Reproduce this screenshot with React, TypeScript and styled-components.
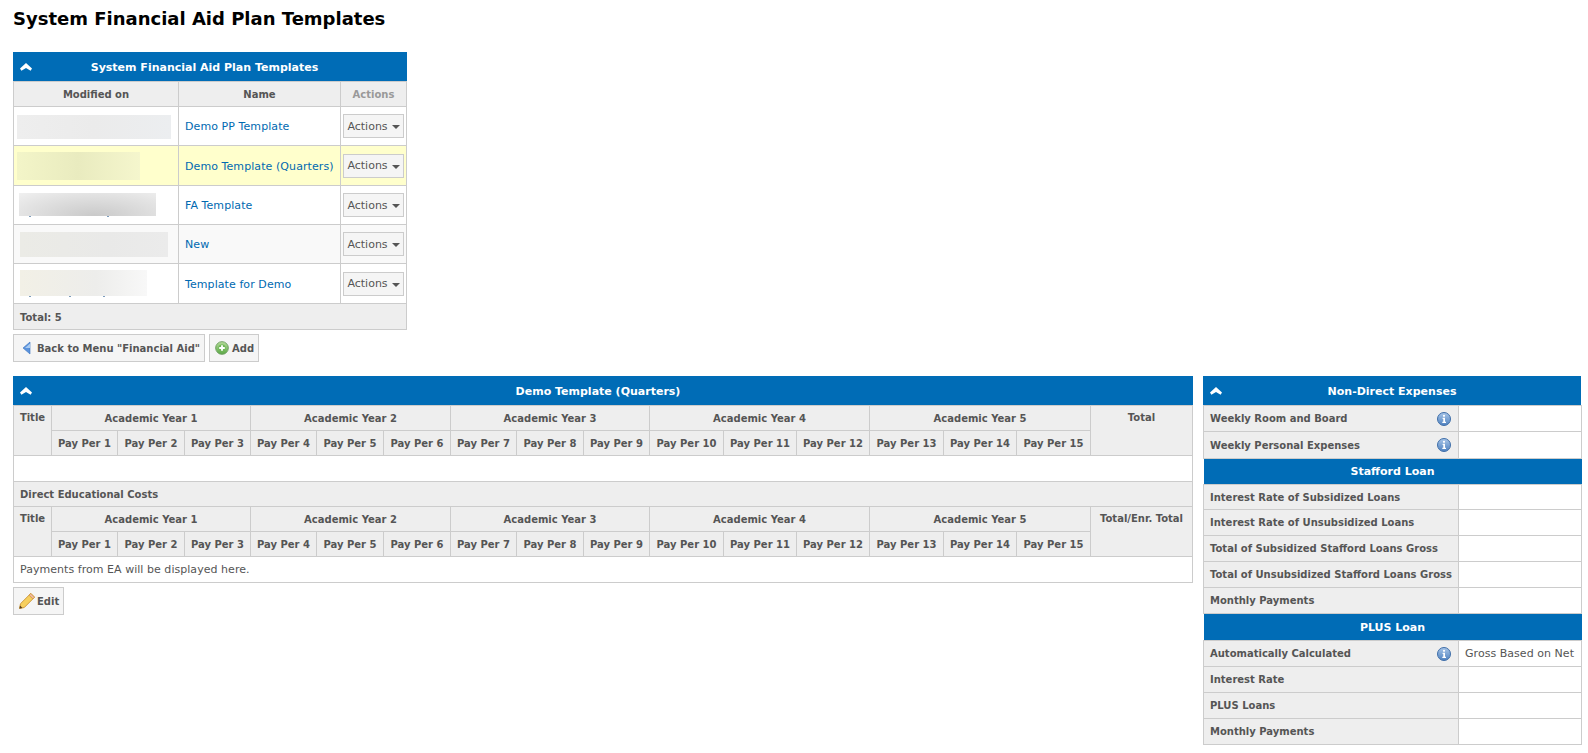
import React from "react";
import styled, { createGlobalStyle } from "styled-components";

const Global = createGlobalStyle`
  html, body { margin: 0; padding: 0; background: #fff; }
  body { font-family: "DejaVu Sans", Verdana, sans-serif; font-size: 11px; color: #555; }
`;

const Page = styled.div`
  width: 1588px;
  height: 753px;
  overflow: hidden;
  box-sizing: border-box;
  padding: 0 7px 0 13px;
`;
const Title = styled.h1`
  margin: 0;
  padding-top: 9px;
  height: 52px;
  box-sizing: border-box;
  font-size: 18px;
  line-height: 20px;
  font-weight: bold;
  color: #000;
`;
const Panel = styled.section<{ $w?: number }>`
  width: ${(p) => (p.$w ? `${p.$w}px` : "auto")};
  flex: none;
`;
const Bar = styled.div<{ $h?: number; $shift?: number; $flat?: boolean }>`
  position: relative;
  height: ${(p) => p.$h ?? 29}px;
  box-sizing: border-box;
  padding-right: ${(p) => p.$shift ?? 0}px;
  padding-top: ${(p) => (p.$flat ? 0 : 1)}px;
  background: #006cb6;
  color: #fff;
  font-weight: bold;
  font-size: 11px;
  display: flex;
  align-items: center;
  justify-content: center;
`;
const Chevron = styled.svg`
  position: absolute;
  left: 7px;
  top: 11px;
`;
const Table = styled.table`
  width: 100%;
  table-layout: fixed;
  border-collapse: collapse;
`;
const Th = styled.th<{ $muted?: boolean; $top?: boolean; $h?: number }>`
  height: ${(p) => p.$h ?? 24}px;
  padding: ${(p) => (p.$top ? "5px 0 0" : "1px 0 0")};
  box-sizing: border-box;
  vertical-align: ${(p) => (p.$top ? "top" : "middle")};
  text-align: center;
  background: #eee;
  border: 1px solid #ccc;
  color: ${(p) => (p.$muted ? "#999" : "#555")};
  font-size: 10px;
  font-weight: bold;
  line-height: 14px;
  white-space: nowrap;
`;
const Td = styled.td<{ $tone?: "white" | "yellow" | "grey"; $h?: number }>`
  height: ${(p) => p.$h ?? 39}px;
  padding: 0;
  box-sizing: border-box;
  border: 1px solid #ccc;
  background: ${(p) => (p.$tone === "yellow" ? "#ffc" : p.$tone === "grey" ? "#f9f9f9" : "#fff")};
`;
const BlurTd = styled(Td)`
  vertical-align: top;
`;
const NameTd = styled(Td)`
  padding: 1px 0 0 6px;
  white-space: nowrap;
`;
const ActionTd = styled(Td)`
  padding-left: 2px;
`;
const Link = styled.a`
  color: #0069b1;
  text-decoration: none;
  font-size: 11px;
  letter-spacing: 0.08px;
`;
const Blur = styled.div<{ $w: number; $h: number; $x: number; $y: number; $bg: string }>`
  position: relative;
  width: ${(p) => p.$w}px;
  height: ${(p) => p.$h}px;
  margin: ${(p) => `${p.$y}px 0 0 ${p.$x}px`};
  background: ${(p) => p.$bg};
`;
const Speck = styled.i<{ $x: number; $y: number }>`
  position: absolute;
  left: ${(p) => p.$x}px;
  top: ${(p) => p.$y}px;
  width: 2px;
  height: 1px;
  background: #7c9cbc;
`;
const ActionBtn = styled.div`
  width: 61px;
  height: 24px;
  box-sizing: border-box;
  border: 1px solid #ccc;
  background: #f5f5f5;
  display: flex;
  align-items: center;
  justify-content: center;
  gap: 4px;
  color: #555;
  font-size: 11px;
`;
const Caret = styled.span`
  width: 0;
  height: 0;
  margin-top: 2px;
  border-left: 4px solid transparent;
  border-right: 4px solid transparent;
  border-top: 4px solid #555;
`;
const TotalTd = styled.td`
  height: 26px;
  padding: 1px 0 0 6px;
  box-sizing: border-box;
  background: #eee;
  border: 1px solid #ccc;
  font-size: 10px;
  font-weight: bold;
  color: #555;
`;
const Buttons = styled.div`
  display: flex;
  gap: 4px;
  margin-top: 4px;
`;
const Button = styled.div<{ $pad?: number; $gap?: number }>`
  height: 28px;
  box-sizing: border-box;
  padding: 0 4px 0 ${(p) => p.$pad ?? 5}px;
  display: flex;
  align-items: center;
  gap: ${(p) => p.$gap ?? 3}px;
  border: 1px solid #ccc;
  background: #f5f5f5;
  color: #555;
  font-size: 10px;
  font-weight: bold;
  white-space: nowrap;
`;
const Lower = styled.div`
  display: flex;
  gap: 10px;
  margin-top: 14px;
  align-items: flex-start;
`;
const Main = styled.div`
  flex: none;
  width: 1180px;
`;
const PlainTd = styled.td<{ $h?: number }>`
  height: ${(p) => p.$h ?? 26}px;
  padding: 0 0 0 6px;
  box-sizing: border-box;
  border: 1px solid #ccc;
  background: #fff;
  color: #555;
  font-size: 11px;
  letter-spacing: 0.04px;
  white-space: nowrap;
`;
const SectionTd = styled(PlainTd)`
  background: #eee;
  font-size: 10px;
  font-weight: bold;
  letter-spacing: 0;
`;
const LabelTd = styled.th<{ $h: number }>`
  height: ${(p) => p.$h}px;
  padding: 0 7px 0 6px;
  box-sizing: border-box;
  background: #eee;
  border: 1px solid #ccc;
  font-size: 10px;
  font-weight: bold;
  color: #555;
  text-align: left;
  white-space: nowrap;
`;
const LabelInner = styled.div`
  display: flex;
  align-items: center;
  justify-content: space-between;
`;
const BarTd = styled.td`
  padding: 0;
  border: 0;
`;

const ChevronUp = () => (
  <Chevron width="12" height="8" viewBox="0 0 12 8">
    <path d="M6 0 L12 5.4 L10.6 7.8 L6 5 L1.4 7.8 L0 5.4 Z" fill="#fff" />
  </Chevron>
);
const Info = () => (
  <svg width="14" height="14" viewBox="0 0 14 14">
    <defs>
      <linearGradient id="ig" x1="0" y1="0" x2="0" y2="1">
        <stop offset="0" stopColor="#a9c6e8" />
        <stop offset="1" stopColor="#4f82c0" />
      </linearGradient>
    </defs>
    <circle cx="7" cy="7" r="6.5" fill="url(#ig)" stroke="#3f6ea8" />
    <circle cx="7" cy="3.8" r="1.1" fill="#fff" />
    <path d="M5.6 5.8 H8 V9.8 H9 V11 H5.3 V9.8 H6.3 V7 H5.6 Z" fill="#fff" />
  </svg>
);
const BackIcon = () => (
  <svg width="9" height="14" viewBox="0 0 9 14">
    <path d="M8 1 L1 7 L8 13 Z" fill="#5b93dc" stroke="#3b72c0" strokeWidth="0.6" />
    <path d="M8 2.5 L3 7 L8 7 Z" fill="#a9cbf2" />
  </svg>
);
const AddIcon = () => (
  <svg width="14" height="14" viewBox="0 0 15 15">
    <defs>
      <linearGradient id="ag" x1="0" y1="0" x2="0" y2="1">
        <stop offset="0" stopColor="#b5dc9a" />
        <stop offset="1" stopColor="#5aa845" />
      </linearGradient>
    </defs>
    <circle cx="7.5" cy="7.5" r="6.8" fill="url(#ag)" stroke="#6f9f62" />
    <circle cx="7.5" cy="7.5" r="3.8" fill="#6eb655" />
    <path d="M6.5 4.5 H8.5 V6.5 H10.5 V8.5 H8.5 V10.5 H6.5 V8.5 H4.5 V6.5 H6.5 Z" fill="#fff" />
  </svg>
);
const EditIcon = () => (
  <svg width="16" height="16" viewBox="0.6 0.6 14.8 14.8">
    <path d="M11.5 1 L15 4.5 L5.5 14 L1 15 L2 10.5 Z" fill="#f6cf5e" stroke="#c9902e" strokeWidth="0.8" />
    <path d="M11.5 1 L15 4.5 L13.4 6.1 L9.9 2.6 Z" fill="#f0b8a0" stroke="#c9902e" strokeWidth="0.6" />
    <path d="M1 15 L1.6 12.2 L3.8 14.4 Z" fill="#5a4020" />
  </svg>
);

const rows = [
  { name: "Demo PP Template", tone: "white", h: 39, blur: { $w: 154, $h: 24, $x: 3, $y: 8, $bg: "linear-gradient(90deg,#eeeeee,#ebebeb 50%,#eceef0)" }, specks: [] },
  { name: "Demo Template (Quarters)", tone: "yellow", h: 40, blur: { $w: 123, $h: 28, $x: 3, $y: 6, $bg: "linear-gradient(90deg,#f3f5c8,#e9ebbf 50%,#f5f6cd)" }, specks: [] },
  { name: "FA Template", tone: "white", h: 39, blur: { $w: 137, $h: 23, $x: 5, $y: 7, $bg: "radial-gradient(ellipse at 55% 100%,#c9c9c9,#e4e4e4 70%,#f0f0f0)" }, specks: [10, 88] },
  { name: "New", tone: "grey", h: 39, blur: { $w: 148, $h: 25, $x: 6, $y: 7, $bg: "linear-gradient(90deg,#ebebe6,#e9e9e8 60%,#ebebeb)" }, specks: [] },
  { name: "Template for Demo", tone: "white", h: 40, blur: { $w: 127, $h: 26, $x: 6, $y: 6, $bg: "linear-gradient(90deg,#f2f0e6,#ededeb 60%,#f8f8f8)" }, specks: [9, 49, 83] },
] as const;

const widths = [38, 66, 67, 66, 66, 67, 67, 66, 67, 66, 74, 73, 73, 74, 73, 74, 102];
const years = ["Academic Year 1", "Academic Year 2", "Academic Year 3", "Academic Year 4", "Academic Year 5"];
const pers = Array.from({ length: 15 }, (_, i) => `Pay Per ${i + 1}`);

const HeadRows = ({ total }: { total: string }) => (
  <>
    <tr>
      <Th rowSpan={2} $top $h={25}>Title</Th>
      {years.map((y) => <Th key={y} colSpan={3} $h={25}>{y}</Th>)}
      <Th rowSpan={2} $top>{total}</Th>
    </tr>
    <tr>
      {pers.map((p) => <Th key={p} $h={25}>{p}</Th>)}
    </tr>
  </>
);

const Section = ({ title, h }: { title: string; h: number }) => (
  <tr>
    <BarTd colSpan={2}><Bar $h={h} $flat>{title}</Bar></BarTd>
  </tr>
);
const Row = ({ label, info, value, h = 26 }: { label: string; info?: boolean; value?: string; h?: number }) => (
  <tr>
    <LabelTd $h={h}><LabelInner>{label}{info && <Info />}</LabelInner></LabelTd>
    <PlainTd $h={h}>{value}</PlainTd>
  </tr>
);

export default function App() {
  return (
    <Page>
      <Global />
      <Title>System Financial Aid Plan Templates</Title>
      <Panel $w={394}>
        <Bar $shift={11}><ChevronUp />System Financial Aid Plan Templates</Bar>
        <Table>
          <colgroup><col style={{ width: 165 }} /><col style={{ width: 162 }} /><col style={{ width: 66 }} /></colgroup>
          <tbody>
            <tr>
              <Th $h={25}>Modified on</Th>
              <Th $h={25}>Name</Th>
              <Th $h={25} $muted>Actions</Th>
            </tr>
            {rows.map((r) => (
              <tr key={r.name}>
                <BlurTd $tone={r.tone} $h={r.h}>
                  <Blur {...r.blur}>
                    {r.specks.map((s) => <Speck key={s} $x={s} $y={r.blur.$h} />)}
                  </Blur>
                </BlurTd>
                <NameTd $tone={r.tone} $h={r.h}><Link>{r.name}</Link></NameTd>
                <ActionTd $tone={r.tone} $h={r.h}><ActionBtn>Actions<Caret /></ActionBtn></ActionTd>
              </tr>
            ))}
            <tr><TotalTd colSpan={3}>Total: 5</TotalTd></tr>
          </tbody>
        </Table>
        <Buttons>
          <Button $pad={8} $gap={6}><BackIcon />Back to Menu "Financial Aid"</Button>
          <Button><AddIcon />Add</Button>
        </Buttons>
      </Panel>
      <Lower>
        <Main>
          <Panel>
            <Bar $shift={10}><ChevronUp />Demo Template (Quarters)</Bar>
            <Table>
              <colgroup>{widths.map((w, i) => <col key={i} style={{ width: w }} />)}</colgroup>
              <tbody>
                <HeadRows total="Total" />
                <tr><PlainTd colSpan={17} $h={26} /></tr>
                <tr><SectionTd colSpan={17} $h={25}>Direct Educational Costs</SectionTd></tr>
                <HeadRows total="Total/Enr. Total" />
                <tr><PlainTd colSpan={17} $h={26}>Payments from EA will be displayed here.</PlainTd></tr>
              </tbody>
            </Table>
          </Panel>
          <Buttons>
            <Button $gap={2}><EditIcon />Edit</Button>
          </Buttons>
        </Main>
        <Panel $w={378}>
          <Bar><ChevronUp />Non-Direct Expenses</Bar>
          <Table>
            <colgroup><col style={{ width: 255 }} /><col style={{ width: 123 }} /></colgroup>
            <tbody>
              <Row label="Weekly Room and Board" info />
              <Row label="Weekly Personal Expenses" info h={27} />
              <Section title="Stafford Loan" h={25} />
              <Row label="Interest Rate of Subsidized Loans" h={25} />
              <Row label="Interest Rate of Unsubsidized Loans" />
              <Row label="Total of Subsidized Stafford Loans Gross" />
              <Row label="Total of Unsubsidized Stafford Loans Gross" />
              <Row label="Monthly Payments" />
              <Section title="PLUS Loan" h={26} />
              <Row label="Automatically Calculated" info value="Gross Based on Net" />
              <Row label="Interest Rate" />
              <Row label="PLUS Loans" />
              <Row label="Monthly Payments" />
            </tbody>
          </Table>
        </Panel>
      </Lower>
    </Page>
  );
}
